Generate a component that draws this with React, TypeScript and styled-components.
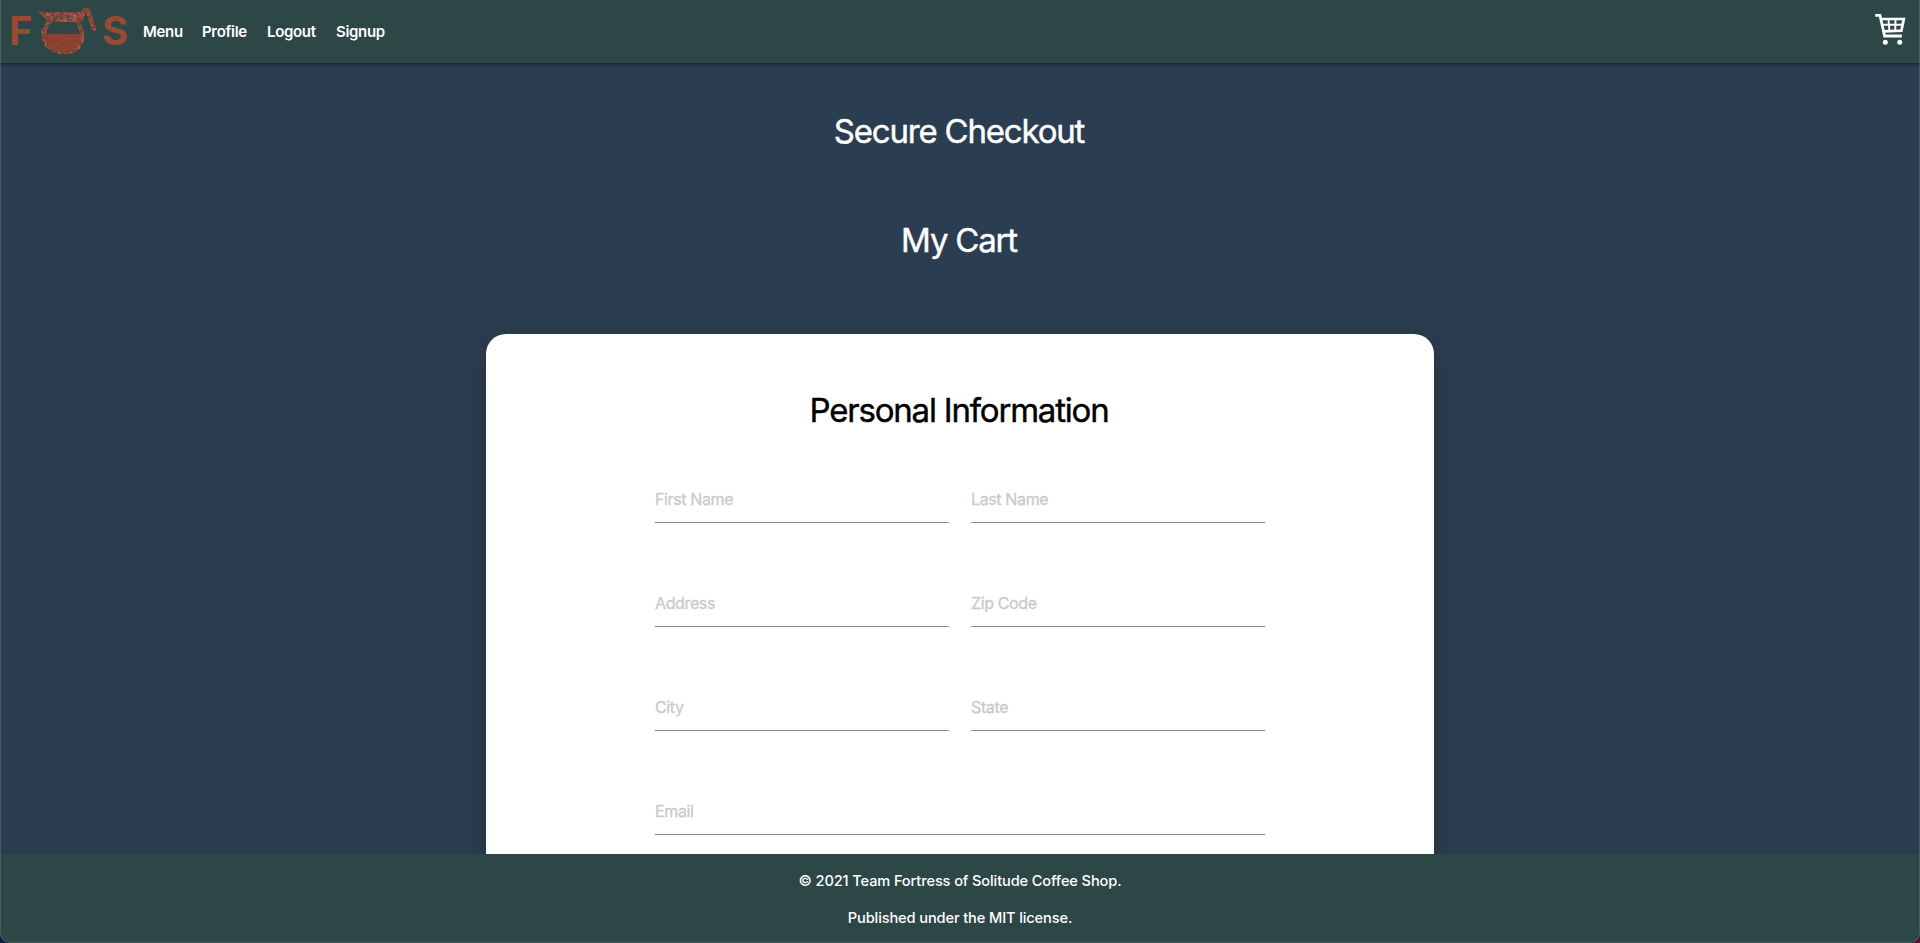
import React from "react";
import styled, { createGlobalStyle } from "styled-components";

const GlobalStyle = createGlobalStyle`
  * { box-sizing: border-box; }
  html, body { margin: 0; padding: 0; overflow: hidden; }
  body {
    font-family: Inter, "Liberation Sans", sans-serif;
    background: linear-gradient(90deg, #06223f 50%, #57123f 50%);
  }
`;

const Page = styled.div`
  position: relative;
  display: flex;
  flex-direction: column;
  height: 100vh;
  background: #2b3d51;
  border-radius: 0 0 10px 10px;
  overflow: hidden;
  &::after {
    content: "";
    position: absolute;
    inset: 0;
    z-index: 3;
    border: 1px solid rgba(255, 255, 255, 0.13);
    border-top: 0;
    border-radius: 0 0 10px 10px;
    pointer-events: none;
  }
`;

const Header = styled.header`
  display: flex;
  align-items: center;
  flex: 0 0 63px;
  padding: 0 14px 0 9px;
  background: #2d4747;
  box-shadow: 0 1px 4px rgba(0, 0, 0, 0.5);
  z-index: 1;
`;

const Brand = styled.a`
  display: flex;
  align-items: flex-start;
  width: 120px;
  height: 63px;
  margin-right: 14px;
  color: #984b34;
  font-size: 40px;
  font-weight: 700;
  line-height: 61px;
`;

const BrandLetter = styled.span<{ $width: number }>`
  flex: 0 0 ${(p) => p.$width}px;
  height: 61px;
`;

const PotDrawing = styled.svg`
  flex: 0 0 67px;
  height: 60px;
`;

const Nav = styled.nav`
  display: flex;
  flex: 1;
`;

const NavLink = styled.a<{ $width: number }>`
  width: ${(p) => p.$width}px;
  color: #fff;
  font-size: 15px;
  font-weight: 600;
  line-height: 20px;
  letter-spacing: -0.32px;
`;

const CartDrawing = styled.svg`
  width: 32px;
  height: 34px;
  margin-bottom: 5px;
`;

const Main = styled.main`
  display: flex;
  flex-direction: column;
  align-items: center;
  flex: 1;
  min-height: 0;
  overflow: hidden;
  padding-top: 47px;
`;

const Title = styled.h1<{ $gap?: number; $dark?: boolean }>`
  flex: none;
  margin: 0 0 ${(p) => p.$gap ?? 0}px;
  padding-right: 2px;
  color: ${(p) => (p.$dark ? "#000" : "#fff")};
  font-size: 33px;
  font-weight: 400;
  line-height: 42px;
  text-align: center;
  letter-spacing: -1.2px;
  -webkit-text-stroke: 0.4px;
`;

const Card = styled.section`
  flex: none;
  width: 948px;
  height: 700px;
  padding: 55px 169px 0;
  background: #fff;
  border-radius: 20px;
  box-shadow: 0 4px 18px rgba(38, 50, 48, 0.9);
`;

const Form = styled.form`
  display: grid;
  grid-template-columns: 1fr 1fr;
  column-gap: 22px;
  row-gap: 58px;
`;

const Input = styled.input<{ $wide?: boolean }>`
  grid-column: ${(p) => (p.$wide ? "1 / -1" : "auto")};
  width: 100%;
  height: 46px;
  padding: 0 0 2px;
  border: 0;
  border-bottom: 1px solid #8c8c8c;
  border-radius: 0;
  outline: 0;
  background: transparent;
  font-family: inherit;
  font-size: 16px;
  letter-spacing: -0.37px;
  &::placeholder {
    color: #cacaca;
    opacity: 1;
    -webkit-text-stroke: 0.3px #cacaca;
  }
`;

const Footer = styled.footer`
  flex: 0 0 89px;
  padding-top: 15px;
  background: #2d4747;
  z-index: 1;
`;

const FooterLine = styled.p`
  margin: 0 0 13px;
  color: #fff;
  font-size: 14.6px;
  font-weight: 500;
  line-height: 24px;
  text-align: center;
  letter-spacing: -0.12px;
`;

const links = [
  { label: "Menu", width: 59 },
  { label: "Profile", width: 65 },
  { label: "Logout", width: 69 },
  { label: "Signup", width: 60 },
];

const fields = ["First Name", "Last Name", "Address", "Zip Code", "City", "State", "Email"];

const speckleTones = ["#b5705a", "#6b3a30", "#3c4441", "#a8472c", "#94766b", "#7a3528"];

const scatter = (n: number) => {
  const v = Math.sin(n) * 43758.5453;
  return v - Math.floor(v);
};

// Scattered flecks give the glass outline its grainy brick texture.
const speckles = Array.from({ length: 1300 }, (_, i) => ({
  x: scatter(i * 12.9898 + 1) * 63,
  y: scatter(i * 78.233 + 2) * 50 + 5,
  tone: speckleTones[Math.floor(scatter(i * 37.719 + 3) * 6)],
}));

function CoffeePot() {
  return (
    <PotDrawing viewBox="-1 0 67 60" aria-hidden="true">
      <defs>
        <clipPath id="glass">
          <path
            clipRule="evenodd"
            d="M1.5 11.5 L8 12.5 L26 12 L45 12 L47.5 8.5 L51 7.5 L54 9 L60.5 29 L58.5 31.5 L55.5 29 L51 15 L49 14 L47 20 L44 22.5 L48 31 L48 41 L44 48.5 L36 53.5 L26 54.5 L16 52 L9 46 L5.5 38 L5.5 30 L10.5 22 L9 18 L4 14 Z
            M15 22 L11 30 L10 37 L12 44 L18 49 L27 51 L36 49 L42 43 L44.5 36 L43 30 L40 22 Z"
          />
        </clipPath>
        <clipPath id="coffee">
          <path d="M9 34 H45.5 L44 42 L41 47 L34 51.5 L22 51.5 L14 48 L9.5 41 Z" />
        </clipPath>
      </defs>
      <g clipPath="url(#glass)">
        <rect width="64" height="60" fill="#8a4a3c" />
        {speckles.map((s, i) => (
          <rect key={i} x={s.x} y={s.y} width="1.5" height="1.5" fill={s.tone} opacity="0.75" />
        ))}
      </g>
      <g clipPath="url(#coffee)">
        <rect y="32" width="64" height="21" fill="#8e432d" />
        {speckles.map((s, i) => (
          <rect key={i} x={s.x} y={s.y} width="2" height="1" fill={s.tone} opacity="0.15" />
        ))}
      </g>
    </PotDrawing>
  );
}

function CartIcon() {
  return (
    <CartDrawing viewBox="0 0 32 34" fill="none" stroke="#fff" aria-label="Cart">
      <path d="M1.2 3.3 H6 L10.6 24 H27.8" strokeWidth="2.8" />
      <path d="M6.8 7 H29.8 L27.4 18.6 L10 19.3" strokeWidth="2.7" />
      <path d="M14.4 6 L15.4 19 M21.6 6 L21.2 19 M8 12.8 H28.7" strokeWidth="1.9" />
      <circle cx="11.3" cy="30.2" r="2.5" fill="#fff" stroke="none" />
      <circle cx="25.7" cy="30.2" r="2.5" fill="#fff" stroke="none" />
    </CartDrawing>
  );
}

export default function App() {
  return (
    <Page>
      <GlobalStyle />
      <Header>
        <Brand>
          <BrandLetter $width={26}>F</BrandLetter>
          <CoffeePot />
          <BrandLetter $width={27}>S</BrandLetter>
        </Brand>
        <Nav>
          {links.map((l) => (
            <NavLink key={l.label} $width={l.width}>{l.label}</NavLink>
          ))}
        </Nav>
        <CartIcon />
      </Header>
      <Main>
        <Title $gap={67}>Secure Checkout</Title>
        <Title $gap={73}>My Cart</Title>
        <Card>
          <Title $dark $gap={46}>Personal Information</Title>
          <Form>
            {fields.map((f) => (
              <Input key={f} $wide={f === "Email"} placeholder={f} aria-label={f} />
            ))}
          </Form>
        </Card>
      </Main>
      <Footer>
        <FooterLine>© 2021 Team Fortress of Solitude Coffee Shop.</FooterLine>
        <FooterLine>Published under the MIT license.</FooterLine>
      </Footer>
    </Page>
  );
}
